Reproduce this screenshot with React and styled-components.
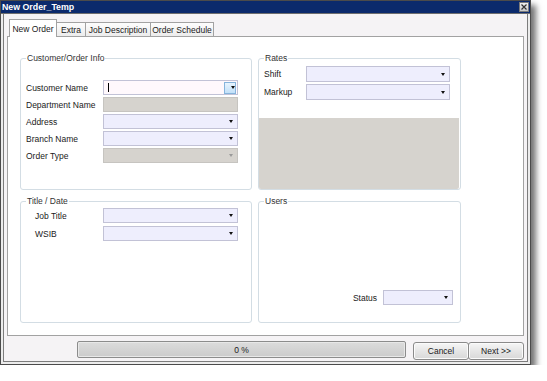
import React from 'react'
import styled, { createGlobalStyle } from 'styled-components'

const GlobalStyle = createGlobalStyle`
  body {
    margin: 0;
    background: #fff;
    font-family: "Liberation Sans", Arial, sans-serif;
    font-size: 8.5px;
    color: #111;
  }
`;

const Window = styled.div`
  width: 531px;
  height: 365px;
  box-sizing: border-box;
  border: 1px solid #4b4b4b;
  display: flex;
  flex-direction: column;
  background: #ececec;
  box-shadow: 5px 5px 6px rgba(0, 0, 0, 0.55);
`;

const TitleBar = styled.div`
  height: 12px;
  background: #0b2a6c;
  border-bottom: 1px solid #6e6e6e;
  display: flex;
  align-items: center;
  justify-content: space-between;
  padding: 0 1px 0 1px;
`;

const Title = styled.span`
  color: #fff;
  font-weight: bold;
  font-size: 8.8px;
  line-height: 12px;
`;

const CloseButton = styled.div`
  width: 8px;
  height: 8px;
  background: linear-gradient(#f0f0f0, #c8c8c8);
  border: 1px solid #7a7a7a;
  display: flex;
  align-items: center;
  justify-content: center;
`;

const Frame = styled.div`
  flex: 1;
  margin: 0 2px 2px;
  border: 1px solid #7c7c7c;
  border-top: none;
  background: #f5f3f5;
  display: flex;
  flex-direction: column;
  padding: 0 3px;
`;

const TabStrip = styled.div`
  height: 22px;
  display: flex;
  align-items: flex-end;
  padding-left: 2px;
`;

const Tab = styled.div`
  width: ${p => p.$w}px;
  height: ${p => (p.$active ? 18 : 14)}px;
  box-sizing: border-box;
  border: 1px solid #a2a2a2;
  border-bottom: none;
  margin-right: -1px;
  background: ${p => (p.$active ? '#fff' : 'linear-gradient(#fdfdfd, #ececec)')};
  position: relative;
  z-index: ${p => (p.$active ? 2 : 1)};
  margin-bottom: ${p => (p.$active ? -1 : 0)}px;
  display: flex;
  align-items: center;
  justify-content: center;
  color: #1a1a1a;
  white-space: nowrap;
`;

const Panel = styled.div`
  height: 300px;
  box-sizing: border-box;
  border: 1px solid #a2a2a2;
  background: #fff;
  display: grid;
  grid-template-columns: 232px 203px;
  grid-template-rows: 132px 122px;
  column-gap: 6px;
  row-gap: 11px;
  padding: 21px 0 0 12px;
`;

const GroupBox = styled.div`
  position: relative;
  box-sizing: border-box;
  border: 1px solid #d3dde4;
  border-radius: 3px;
  padding: ${p => p.$pad};
`;

const Legend = styled.span`
  position: absolute;
  top: -6px;
  left: 5px;
  padding: 0 1px;
  background: #fff;
  line-height: 11px;
  color: #333;
  white-space: nowrap;
`;

const FieldGrid = styled.div`
  display: grid;
  grid-template-columns: ${p => p.$label}px ${p => p.$input}px;
  grid-auto-rows: ${p => p.$row}px;
  row-gap: ${p => p.$gap}px;
  align-items: center;
  padding-left: ${p => p.$indent || 0}px;
`;

const Label = styled.span`
  color: #1a1a1a;
  white-space: nowrap;
`;

const Combo = styled.div`
  height: 100%;
  box-sizing: border-box;
  border: 1px solid ${p => (p.$disabled ? '#c6c4c0' : '#c2c2d6')};
  background: ${p => (p.$disabled ? '#d6d3ce' : p.$focus ? '#fff8fc' : '#eeeefd')};
  display: flex;
  align-items: center;
  padding: 0 4px 0 4px;
`;

const Arrow = styled.span`
  margin-left: auto;
  width: 0;
  height: 0;
  border-left: 2.5px solid transparent;
  border-right: 2.5px solid transparent;
  border-top: 3px solid ${p => (p.$muted ? '#9a9a9a' : '#111')};
`;

const Caret = styled.span`
  width: 1px;
  height: 9px;
  background: #000;
`;

const DropButton = styled.span`
  margin-left: auto;
  margin-right: -3px;
  width: 12px;
  height: 12px;
  box-sizing: border-box;
  border: 1px solid #86b4dc;
  background: linear-gradient(#e8f4fe, #c2e0f8);
  display: flex;
  align-items: center;
  justify-content: center;
`;

const RatesBox = styled(GroupBox)`
  display: flex;
  flex-direction: column;
`;

const GrayArea = styled.div`
  margin: auto 1px 0 0;
  height: 71px;
  background: #d6d3ce;
  border-radius: 0 0 2px 2px;
`;

const UsersBox = styled(GroupBox)`
  display: flex;
  align-items: flex-end;
  justify-content: flex-end;
`;

const StatusRow = styled.div`
  display: flex;
  align-items: center;
  gap: 6px;
  height: 15px;
`;

const StatusCombo = styled(Combo)`
  width: 70px;
`;

const BottomBar = styled.div`
  display: flex;
  justify-content: flex-end;
  align-items: flex-start;
  padding-top: 5px;
`;

const Progress = styled.div`
  width: 329px;
  height: 17px;
  box-sizing: border-box;
  border: 1px solid #8c8c8c;
  border-radius: 2px;
  box-shadow: inset 0 0 0 1px #e8e8e8;
  background: linear-gradient(#dcdcdc, #cbcbcb);
  display: flex;
  align-items: center;
  justify-content: center;
  margin-right: 7px;
  color: #1a1a1a;
`;

const Button = styled.div`
  width: 56px;
  height: 18px;
  box-sizing: border-box;
  margin-top: 1px;
  margin-left: ${p => (p.$joined ? -1 : 0)}px;
  border: 1px solid #8a8a8a;
  border-radius: 3px;
  background: linear-gradient(#f6f6f6, #e6e6e6 50%, #d8d8d8);
  box-shadow: inset 0 0 0 1px #fbfbfb;
  display: flex;
  align-items: center;
  justify-content: center;
  color: #1a1a1a;
`;

const Field = ({ disabled, focus }) => (
  <Combo $disabled={disabled} $focus={focus}>
    {focus ? (
      <>
        <Caret />
        <DropButton><Arrow /></DropButton>
      </>
    ) : (
      <Arrow $muted={disabled} />
    )}
  </Combo>
);

const App = () => (
  <>
    <GlobalStyle />
    <Window>
      <TitleBar>
        <Title>New Order_Temp</Title>
        <CloseButton>
          <svg width="6" height="6" viewBox="0 0 6 6">
            <path d="M0.5 0.5 L5.5 5.5 M5.5 0.5 L0.5 5.5" stroke="#333" strokeWidth="1.2" />
          </svg>
        </CloseButton>
      </TitleBar>
      <Frame>
        <TabStrip>
          <Tab $w={48} $active>New Order</Tab>
          <Tab $w={30}>Extra</Tab>
          <Tab $w={66}>Job Description</Tab>
          <Tab $w={64}>Order Schedule</Tab>
        </TabStrip>
        <Panel>
          <GroupBox $pad="21px 0 0 5px">
            <Legend>Customer/Order Info</Legend>
            <FieldGrid $label={77} $input={135} $row={15} $gap={2}>
              <Label>Customer Name</Label>
              <Field focus />
              <Label>Department Name</Label>
              <Combo $disabled />
              <Label>Address</Label>
              <Field />
              <Label>Branch Name</Label>
              <Field />
              <Label>Order Type</Label>
              <Field disabled />
            </FieldGrid>
          </GroupBox>
          <RatesBox $pad="7px 0 0 0">
            <Legend>Rates</Legend>
            <FieldGrid $label={42} $input={144} $row={16} $gap={2} $indent={5}>
              <Label>Shift</Label>
              <Field />
              <Label>Markup</Label>
              <Field />
            </FieldGrid>
            <GrayArea />
          </RatesBox>
          <GroupBox $pad="6px 0 0 14px">
            <Legend>Title / Date</Legend>
            <FieldGrid $label={68} $input={135} $row={15} $gap={3}>
              <Label>Job Title</Label>
              <Field />
              <Label>WSIB</Label>
              <Field />
            </FieldGrid>
          </GroupBox>
          <UsersBox $pad="0 7px 17px 0">
            <Legend>Users</Legend>
            <StatusRow>
              <Label>Status</Label>
              <StatusCombo><Arrow /></StatusCombo>
            </StatusRow>
          </UsersBox>
        </Panel>
        <BottomBar>
          <Progress>0 %</Progress>
          <Button>Cancel</Button>
          <Button $joined>Next &gt;&gt;</Button>
        </BottomBar>
      </Frame>
    </Window>
  </>
);

export default App;
